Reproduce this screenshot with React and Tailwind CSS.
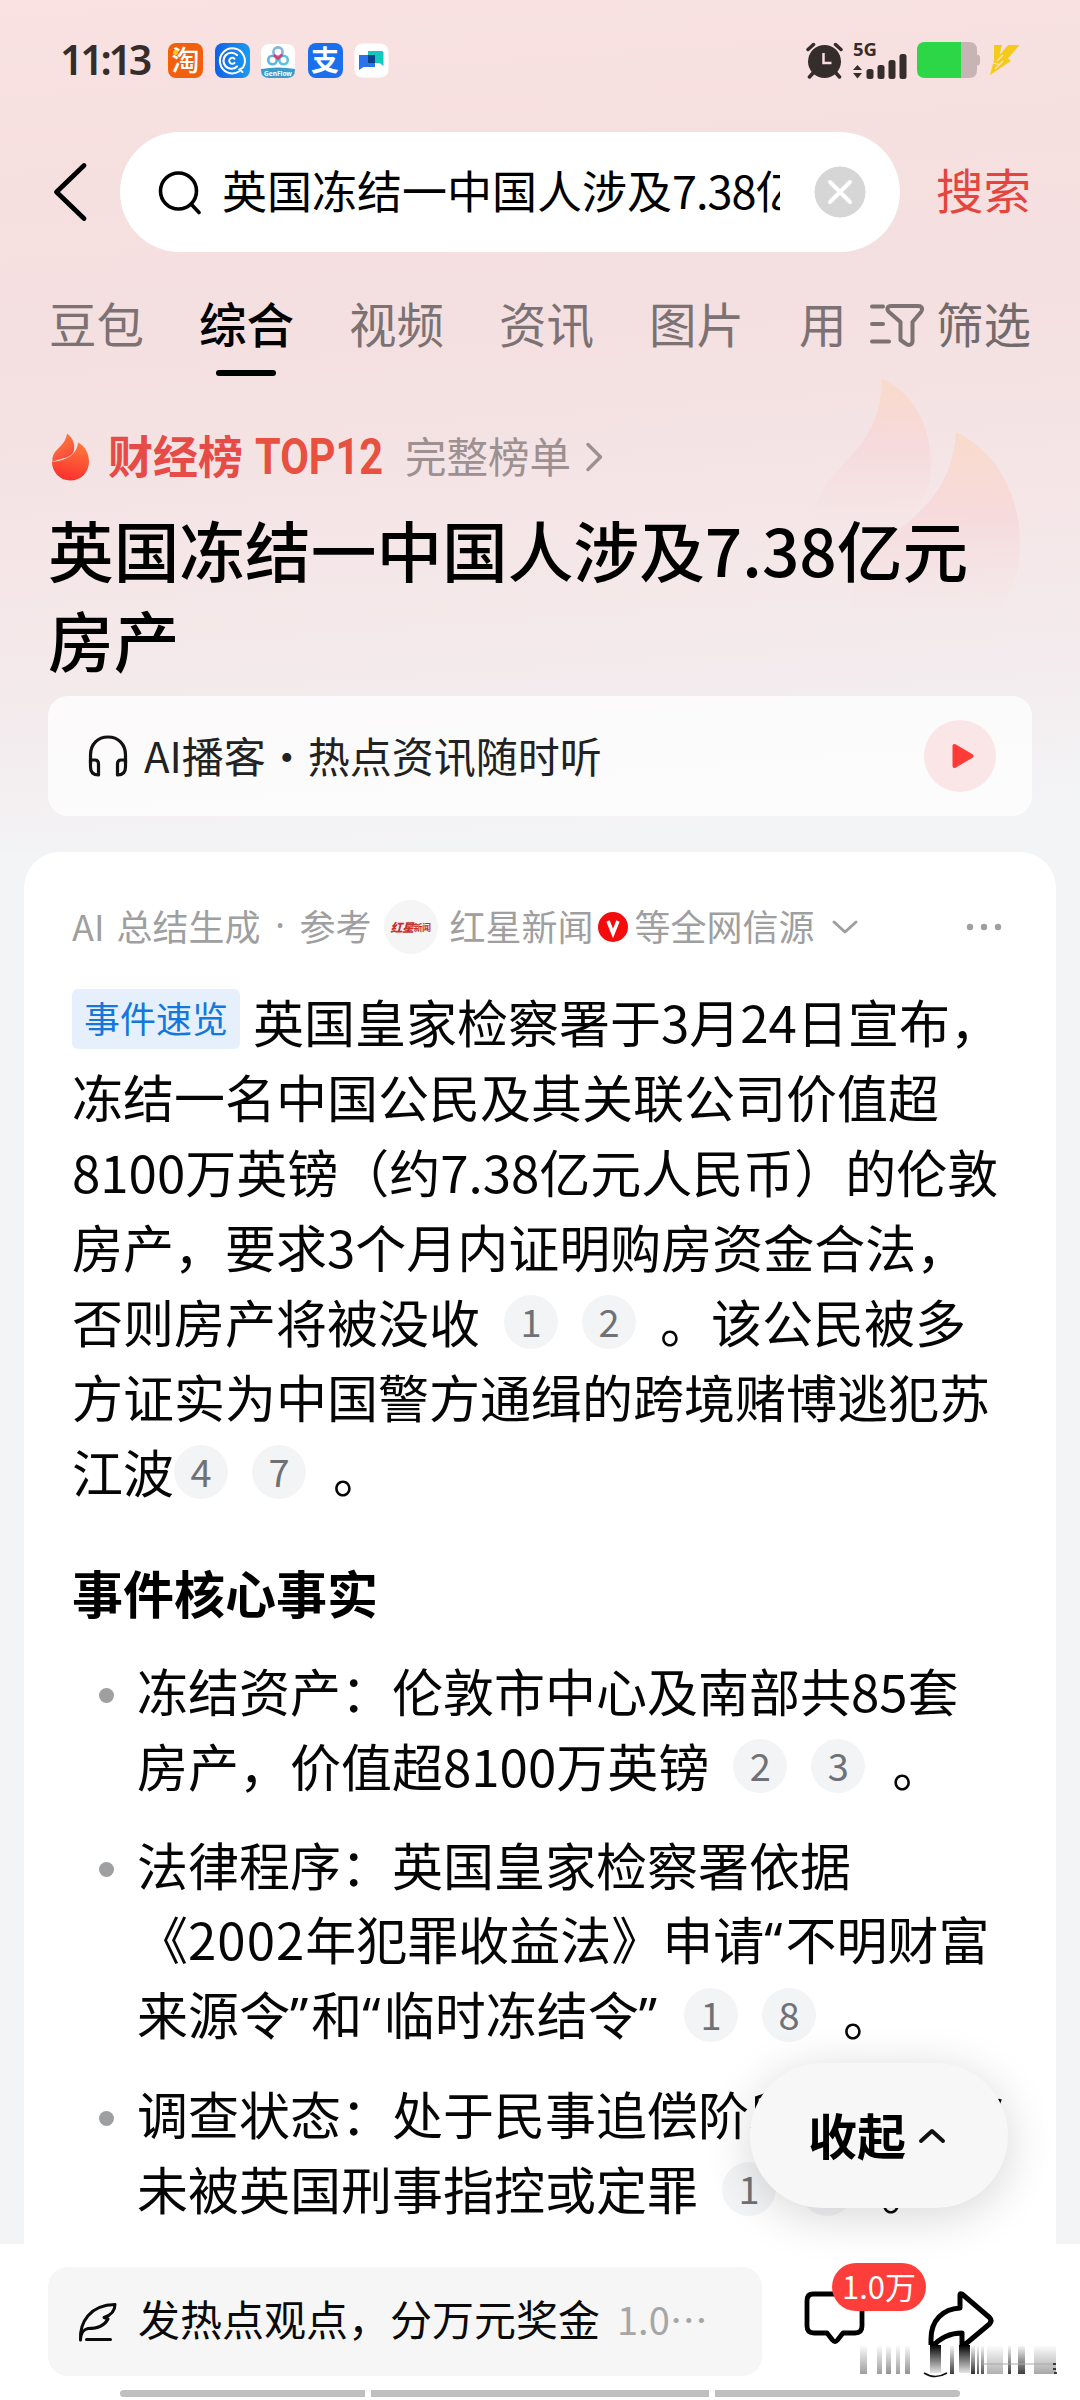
import React from 'react';

const tabs = ['豆包', '综合', '视频', '资讯', '图片', '用'];

// Citations are numbers, everything else is plain text
const summaryLines = [
  ['冻结一名中国公民及其关联公司价值超'],
  ['8100万英镑（约7.38亿元人民币）的伦敦'],
  ['房产，要求3个月内证明购房资金合法，'],
  ['否则房产将被没收', 1, 2, '。该公民被多'],
  ['方证实为中国警方通缉的跨境赌博逃犯苏'],
];

const facts = [
  [['冻结资产：伦敦市中心及南部共85套'], ['房产，价值超8100万英镑', 2, 3, '。']],
  [
    ['法律程序：英国皇家检察署依据'],
    ['《2002年犯罪收益法》申请“不明财富'],
    ['来源令”和“临时冻结令”', 1, 8, '。'],
  ],
  [['调查状态：处于民事追偿阶段，苏江波'], ['未被英国刑事指控或定罪', 1, 2, '。']],
];

// x, width, opacity
const smudgeBars = [
  [3, 7, 0.4], [20, 5, 0.4], [29, 5, 0.45], [39, 4, 0.4], [48, 5, 0.45],
  [93, 4, 0.8], [114, 4, 0.85], [120, 2, 0.7], [124, 3, 0.7],
  [130, 16, 0.32], [151, 3, 0.8], [161, 7, 0.8], [177, 22, 0.36],
];

const Cite = ({ n }) => (
  <span className="flex h-[54px] w-[54px] shrink-0 items-center justify-center rounded-full bg-[#f3f4f6] pb-0.5 text-[38px] leading-none text-[#6f7174]">
    {n}
  </span>
);

// Curly quotes are narrow, so they come from the Latin face
const RichText = ({ text }) => (
  <span className={text === '。' ? 'pl-[3px]' : ''}>
    {text.split(/([“”]|2002)/).map((part, i) => {
      if (part === '“' || part === '”') {
        return <span key={i} className="font-['Noto_Sans'] tracking-[3px]">{part}</span>;
      }
      if (part === '2002') {
        return <span key={i} className="tracking-[1px]">{part}</span>;
      }
      return part;
    })}
  </span>
);

const Line = ({ parts }) => (
  <div className="flex h-[75px] items-center gap-6 whitespace-nowrap">
    {parts.map((part, i) =>
      typeof part === 'number' ? <Cite key={i} n={part} /> : <RichText key={i} text={part} />
    )}
  </div>
);

const StatusBar = () => (
  <div className="flex h-[120px] items-center pl-[60px] pr-[60px]">
    <span className="w-[108px] pb-0.5 font-['Noto_Sans'] text-[41px] font-semibold leading-none tracking-[-3.2px] text-[#352c2c]">
      11:13
    </span>
    <div className="flex items-center gap-[11.5px]">
      <span className="relative flex h-[35px] w-[35px] items-center justify-center rounded-lg bg-[#f2600c] pb-0.5 text-[28px] font-medium leading-none text-white">
        淘
        <i className="absolute left-[5px] top-[7px] h-[5px] w-[5px] rounded-full bg-[#fdc81a]" />
      </span>
      <svg className="h-[35px] w-[35px]" viewBox="0 0 35 35" fill="none" stroke="#fff" strokeLinecap="round">
        <defs>
          <linearGradient id="qb" x1="0" x2="1">
            <stop offset="0" stopColor="#1260e6" />
            <stop offset="1" stopColor="#1a9bf0" />
          </linearGradient>
        </defs>
        <rect width="35" height="35" rx="8" fill="url(#qb)" stroke="none" />
        <path d="M24 28.5A12.500 12.500 0 1 1 28 24.500L24.500 26.500L27.500 29" strokeWidth="2" />
        <path d="M22 12a8 8 0 1 0 0 11.500" strokeWidth="2.200" />
        <path d="M19.500 15.800a3 3 0 1 0 0 4" strokeWidth="2" />
      </svg>
      <svg className="h-[35px] w-[35px]" viewBox="0 0 35 35">
        <rect y="1" width="34" height="34" rx="8" fill="#fff" />
        <path d="M0 26q17 -3 34 0v1q0 8-8 8H8q-8 0-8-8z" fill="#3d9bc9" />
        <g fill="none" strokeWidth="2.600">
          <circle cx="11.500" cy="17" r="4.300" stroke="#5cb5de" />
          <circle cx="22.500" cy="17" r="4.300" stroke="#58c3df" />
          <circle cx="17" cy="9" r="4.600" stroke="#7fb4dc" />
          <path d="M12.800 12l4.200 3.500 4.300-4" stroke="#d93a7c" />
        </g>
        <text x="17" y="32.500" textAnchor="middle" fontSize="6.500" fontWeight="700" fill="#fff" fontFamily="Noto Sans">
          GenFlow
        </text>
      </svg>
      <span className="flex h-[35px] w-[35px] items-center justify-center rounded-lg bg-[#1a6fee] pb-0.5 text-[28px] font-bold leading-none text-white">
        支
      </span>
      <svg className="h-[35px] w-[35px]" viewBox="0 0 35 35">
        <rect x="0.500" y="0.500" width="34" height="34" rx="8" fill="#fff" />
        <path d="M14 8h14q1.500 0 1.500 1.500V23l-4-3H14z" fill="#14c8c0" />
        <path d="M5 12h16v12H9.500L5 27z" fill="#2a73e8" />
        <path d="M14 12h7v8h-7z" fill="#0d3f8c" />
      </svg>
    </div>
    <div className="ml-auto flex items-center gap-2.5">
      <svg className="h-[37px] w-[37px]" viewBox="0 0 37 37" stroke="#352c2c" strokeWidth="3.500" strokeLinecap="round">
        <circle cx="18.500" cy="19.500" r="16.500" fill="#352c2c" stroke="none" />
        <path d="M2 7.500l5.500-5M35 7.500l-5.500-5M7 31l-3.500 4M30 31l3.500 4" />
        <path d="M17.500 11v10h8" stroke="#f8e0e0" strokeWidth="2.500" fill="none" strokeLinecap="butt" />
      </svg>
      <svg className="h-[37px] w-[54px] overflow-visible" viewBox="0 0 54 37" fill="#352c2c">
        <text x="0" y="14" fontSize="18.500" fontWeight="700" fontFamily="Noto Sans">5G</text>
        <path d="M0 28l4.500-5 4.500 5zM0 31l4.500 5.500 4.500-5.500z" />
        <rect x="13.500" y="27" width="7" height="10" rx="2.500" />
        <rect x="24.500" y="23" width="7" height="14" rx="2.500" />
        <rect x="35.500" y="18" width="7" height="19" rx="2.500" />
        <rect x="46.500" y="12" width="7" height="25" rx="2.500" />
      </svg>
      <svg className="h-9 w-[63px]" viewBox="0 0 63 36">
        <path d="M44 0h8q8 0 8 8v4.500q3 .5 3 3v5q0 2.500-3 3V28q0 8-8 8h-8z" fill="#c8b4b4" />
        <path d="M8 0h36v36H8q-8 0-8-8V8q0-8 8-8z" fill="#2bd747" />
      </svg>
      <svg className="h-[30px] w-[30px]" viewBox="0 0 30 30" fill="#f5cb1b">
        <path d="M4 0h8L9.500 10 18 0h11.500L18 13.500l3 2.500L0 30l4-15z" />
        <path d="M3 18l6 1.500M7 16l6-6M5 24l8-8" stroke="#f8e0e0" strokeWidth="1.200" />
      </svg>
    </div>
  </div>
);

const SearchBar = () => (
  <div className="flex h-[144px] items-center pl-[52px] pr-[49px]">
    <svg className="h-[64px] w-[38px]" viewBox="0 0 38 64" fill="none" stroke="#000" strokeWidth="4.800" strokeLinecap="round" strokeLinejoin="round">
      <path d="M32 5.500L4.500 32 32 58.500" />
    </svg>
    <div className="ml-[30px] flex h-[120px] w-[780px] items-center rounded-full bg-white pl-[38px] pr-[34px]">
      <svg className="h-[46px] w-[46px]" viewBox="0 0 46 46" fill="none" stroke="#000" strokeWidth="3.600" strokeLinecap="round">
        <circle cx="20.500" cy="22" r="18" />
        <path d="M33.500 35.500l7.500 8" />
      </svg>
      <span className="mb-[5px] ml-[18px] w-[558px] overflow-hidden whitespace-nowrap text-[45px] leading-[68px] text-black">
        英国冻结一中国人涉及<span className="tracking-[-1px]">7.38</span>亿元房产
      </span>
      <svg className="ml-auto h-[52px] w-[52px]" viewBox="0 0 52 52" fill="none" stroke="#fff" strokeWidth="4" strokeLinecap="round">
        <circle cx="26" cy="26" r="25.500" fill="#d6d6d6" stroke="none" />
        <path d="M16 16l20 20M36 16L16 36" />
      </svg>
    </div>
    <span className="mb-[7px] ml-auto text-[47.5px] leading-none text-[#e5453f]">搜索</span>
  </div>
);

const TabBar = () => (
  <div className="flex h-[116px] items-center pl-[49px] pr-[49px] pt-0.5 text-[47.5px] leading-[60px] text-[#7c7273]">
    <div className="flex gap-[55px]">
      {tabs.map((tab) =>
        tab === '综合' ? (
          <span key={tab} className="relative font-medium text-black">
            {tab}
            <i className="absolute -bottom-[23px] left-[17px] h-1.5 w-[60px] rounded-full bg-black" />
          </span>
        ) : (
          <span key={tab}>{tab}</span>
        )
      )}
    </div>
    <svg className="ml-auto mt-1 h-[48px] w-[56px]" viewBox="0 0 56 48" fill="none" stroke="#7c7273" strokeWidth="4" strokeLinecap="round" strokeLinejoin="round">
      <path d="M3 5.500h11M3 23h11M3 40.500h17" />
      <path d="M22 5h27c4.500 0 5 3.500 3 6L43.500 21v19c0 4-4 5-7 2.500l-5-3.500V21L20 11c-2.500-2.500-2-6 2-6z" />
    </svg>
    <span className="ml-[11px] text-[#736a6b]">筛选</span>
  </div>
);

const Flames = () => (
  <svg className="absolute left-[812px] top-[376px] h-[260px] w-[210px]" viewBox="0 0 210 260">
    <defs>
      <linearGradient id="fl" x1="0" y1="0" x2="0" y2="1">
        <stop offset="0" stopColor="#fcd5b8" stopOpacity=".6" />
        <stop offset=".45" stopColor="#f9cfd2" stopOpacity=".5" />
        <stop offset="1" stopColor="#f6dede" stopOpacity="0" />
      </linearGradient>
    </defs>
    <path d="M70 3C104 18 119 52 119 90C119 118 106 132 90 146L0 150C4 86 68 86 70 3Z" fill="url(#fl)" />
    <path d="M144 56C182 74 208 115 208 168C208 204 195 228 176 244L40 244C34 150 138 160 144 56Z" fill="url(#fl)" />
  </svg>
);

const TopicHeader = () => (
  <div className="px-[48px]">
    <div className="flex h-[72px] items-center">
      <svg className="h-[48px] w-[42px]" viewBox="0 0 42 48">
        <defs>
          <linearGradient id="fa" x1="0" y1="0" x2=".5" y2="1">
            <stop offset="0" stopColor="#ff8a3c" />
            <stop offset="1" stopColor="#f9493c" />
          </linearGradient>
          <linearGradient id="fb" x1=".7" y1="0" x2=".5" y2="1">
            <stop offset="0" stopColor="#ff7a3a" />
            <stop offset="1" stopColor="#fb3030" />
          </linearGradient>
        </defs>
        <path d="M30 9.500C37 13 41 20 41 28.500C41 39.500 33 47.500 22.500 47.500C11 47.500 4 38 4 29C14 28 29 24 30 9.500Z" fill="url(#fb)" />
        <path d="M19 0.500C25 5 27 11 26 17C24 26 12 25 4.500 29C3 16 17 15 19 0.500Z" fill="url(#fa)" />
      </svg>
      <span className="mb-[5px] ml-[18px] text-[45px] font-bold leading-none text-[#e64b48]">财经榜</span>
      <span className="ml-[12px] w-[126px] origin-left scale-x-[0.83] whitespace-nowrap font-['Roboto'] text-[50px] font-bold leading-none text-[#e8503f]">
        TOP12
      </span>
      <span className="mb-[3px] ml-[24px] text-[41.5px] leading-none text-[#9c9091]">完整榜单</span>
      <svg className="ml-[14px] h-[32px] w-[20px]" viewBox="0 0 20 32" fill="none" stroke="#9c9091" strokeWidth="3.500" strokeLinecap="round" strokeLinejoin="round">
        <path d="M3 3.500L15.500 16 3 28.500" />
      </svg>
    </div>
    <h1 className="mt-[11px] text-[65.7px] font-medium leading-[90px] text-black">
      英国冻结一中国人涉及7.38亿元
      <br />
      房产
    </h1>
    <div className="mt-[12px] flex h-[120px] items-center rounded-[20px] bg-white/75 pl-[40px] pr-[36px]">
      <svg className="h-[42px] w-[40px]" viewBox="0 0 40 42" fill="none" stroke="#111" strokeWidth="3.200" strokeLinecap="round" strokeLinejoin="round">
        <path d="M2.500 28V20C2.500 9 10 2 20 2S37.500 9 37.500 20V28" />
        <path d="M2.500 25h4.500q3.500 0 3.500 4v11q-8 0-8-8zM37.500 25H33q-3.500 0-3.500 4v11q8 0 8-8z" />
      </svg>
      <span className="mb-[3px] ml-[16px] text-[42px] leading-none text-[#222]">AI播客・热点资讯随时听</span>
      <svg className="ml-auto h-[72px] w-[72px]" viewBox="0 0 72 72">
        <circle cx="36" cy="36" r="36" fill="#fbe6e7" />
        <path d="M30.500 26v20l17-10z" fill="#ff3b38" stroke="#ff3b38" strokeWidth="4" strokeLinejoin="round" />
      </svg>
    </div>
  </div>
);

const SourceRow = () => (
  <div className="flex h-[54px] items-center whitespace-nowrap text-[36px] leading-none text-[#9f9fa1]">
    <span className="mb-[5px] [word-spacing:4px]">AI 总结生成</span>
    <span className="mb-[5px] w-[39px] text-center font-['Noto_Sans']">·</span>
    <span className="mb-[5px]">参考</span>
    <span className="ml-[12px] flex h-[54px] w-[54px] items-center justify-center rounded-full bg-[#f5f5f5] text-[9px] font-bold tracking-[-0.5px] text-[#c5322f]">
      <b className="text-[12px] italic">红星</b>新闻
    </span>
    <span className="mb-[5px] ml-[12px]">红星新闻</span>
    <svg className="ml-[4px] h-[30px] w-[30px]" viewBox="0 0 30 30">
      <circle cx="15" cy="15" r="15" fill="#f40b0b" />
      <path d="M10 9l5 12.500L20 9" fill="none" stroke="#fff" strokeWidth="3.500" />
    </svg>
    <span className="mb-[5px] ml-[7px]">等全网信源</span>
    <svg className="ml-[16px] h-[16px] w-[28px]" viewBox="0 0 28 16" fill="none" stroke="#9f9fa1" strokeWidth="3" strokeLinecap="round" strokeLinejoin="round">
      <path d="M3 3l11 10L25 3" />
    </svg>
    <svg className="ml-auto mr-[6px] h-[8px] w-[36px]" viewBox="0 0 36 8" fill="#9f9fa1">
      <circle cx="4" cy="4" r="3.200" />
      <circle cx="18" cy="4" r="3.200" />
      <circle cx="32" cy="4" r="3.200" />
    </svg>
  </div>
);

const SummaryCard = () => (
  <div className="mx-[24px] h-[1392px] overflow-hidden rounded-t-[36px] bg-white px-[48px] pt-[48px]">
    <SourceRow />
    <div className="mt-[30px] text-[51px] leading-[75px] text-[#060606]">
      <div className="flex h-[75px] items-center whitespace-nowrap">
        <span className="mb-[6px] mr-[13px] flex h-[60px] w-[168px] items-center justify-center rounded-md bg-[#e5f0fc] pb-1 text-[36px] leading-none text-[#1377dc]">
          事件速览
        </span>
        英国皇家检察署于3月24日宣布，
      </div>
      {summaryLines.map((parts, i) => (
        <Line key={i} parts={parts} />
      ))}
      <div className="flex h-[75px] items-center">
        江波
        <div className="flex items-center gap-6">
          <Cite n={4} />
          <Cite n={7} />
          <span className="pl-[3px]">。</span>
        </div>
      </div>
      <h2 className="mt-[46px] font-bold leading-[75px] text-black">事件核心事实</h2>
      <ul className="mt-[23px] space-y-6">
        {facts.map((lines, i) => (
          <li key={i} className="flex pl-[27px]">
            <i className="mr-[23px] mt-[35px] h-[15px] w-[15px] shrink-0 rounded-full bg-[#9e9fa1]" />
            <div>
              {lines.map((parts, j) => (
                <Line key={j} parts={parts} />
              ))}
            </div>
          </li>
        ))}
      </ul>
    </div>
  </div>
);

const CollapseButton = () => (
  <button className="absolute left-[750px] top-[2063px] flex h-[145px] w-[258px] items-center rounded-full bg-[#f7f7f7] pl-[58px] shadow-[0_8px_48px_rgba(0,0,0,0.16)]">
    <span className="mb-1 text-[49px] font-bold leading-none text-black">收起</span>
    <svg className="ml-[11px] h-[18px] w-[30px]" viewBox="0 0 30 18" fill="none" stroke="#111" strokeWidth="4" strokeLinecap="round" strokeLinejoin="round">
      <path d="M4 14L15 4l11 10" />
    </svg>
  </button>
);

const BottomBar = () => (
  <div className="relative h-[156px] bg-white px-[48px] pt-[23px]">
    <div className="flex items-start">
      <div className="flex h-[109px] w-[714px] items-center rounded-[20px] bg-[#f6f6f6] pl-[29px] text-[42px] leading-none">
        <svg className="h-[42px] w-[42px]" viewBox="0 0 42 42" fill="none" stroke="#0a0a0a" strokeWidth="3" strokeLinecap="round" strokeLinejoin="round">
          <path d="M3.500 39C2.500 21 13 4 38 3.500C38 10 34.500 14 27 16.500l4 1.500c-4 8-14 9.500-20 9.500c-5 1-7 4-7.500 11.500M9.500 38.500h24" />
        </svg>
        <span className="mb-[8px] ml-[19px] text-[#0a0a0a]">发热点观点，分万元奖金</span>
        <span className="mb-[6px] ml-[17px] text-[38px] text-[#a6a6a6]">
          1.0<span>⋯</span>
        </span>
      </div>
      <svg className="ml-[40px] mt-[22px] h-[60px] w-[64px]" viewBox="0 0 64 60" fill="none" stroke="#000" strokeWidth="4.800" strokeLinejoin="round">
        <path d="M11 5h42q7 0 7 7v25q0 7-7 7H41l-5.500 7q-2.500 3-5 0L25 44H12q-7 0-7-7V12q0-7 6-7z" />
      </svg>
      <svg className="ml-[58px] mt-[20px] h-[90px] w-[72px]" viewBox="0 0 72 90" fill="none" stroke="#000" strokeWidth="5" strokeLinejoin="round" strokeLinecap="round">
        <path d="M7 62V52C7 33 19 22 36 21V8q0-2 2-1L65.500 30.500q3 3 0 6.500L38 60V46C24 46 15 52 8 60" />
      </svg>
    </div>
    <span className="absolute left-[832px] top-[19px] flex h-[48px] w-[94px] items-center justify-center rounded-full bg-[#fe3e3a] pb-[3px] text-[31px] leading-none text-white">
      1.0万
    </span>
    <svg className="absolute left-[857px] top-[101px] h-[34px] w-[200px]" viewBox="0 0 200 34">
      <defs>
        <linearGradient id="sm" x1="0" y1="0" x2="0" y2="1">
          <stop offset="0" stopColor="#000" stopOpacity=".05" />
          <stop offset="1" stopColor="#000" stopOpacity=".95" />
        </linearGradient>
        <linearGradient id="stem" x1="0" y1="0" x2="0" y2="1">
          <stop offset="0" stopColor="#000" />
          <stop offset="1" stopColor="#000" stopOpacity=".1" />
        </linearGradient>
      </defs>
      <rect width="200" height="34" fill="#fff" />
      {smudgeBars.map(([x, w, o]) => (
        <rect key={x} x={x} y="1" width={w} height="28" fill="url(#sm)" opacity={o} />
      ))}
      <rect x="73" width="11" height="28" fill="url(#stem)" />
      <rect x="102" width="11" height="28" fill="url(#stem)" />
      <path d="M125 19h73" stroke="#aaa" strokeWidth="1" />
      <path d="M67 28q11 7 23 0M196 19h3M196 24h3M197 28h3" fill="none" stroke="#111" strokeWidth="1.500" />
    </svg>
    <div className="absolute left-[120px] top-[146px] flex h-[7px] w-[840px] gap-1.5 overflow-hidden rounded-full">
      <i className="flex-1 bg-[#bfbfbf]" />
      <i className="w-[338px] bg-[#bfbfbf]" />
      <i className="flex-1 bg-[#bfbfbf]" />
    </div>
  </div>
);

const App = () => (
  <div className="relative h-[2400px] w-[1080px] overflow-hidden bg-[#f3f4f6] font-['Noto_Sans_CJK_SC',sans-serif]">
    <div className="bg-[linear-gradient(176deg,#fae2e2_0%,#f6dfdf_20%,#f4e0e1_40%,#f5e6e7_62%,#f3ecee_80%,#f3f4f6_94%)] pb-[36px]">
      <StatusBar />
      <SearchBar />
      <TabBar />
      <Flames />
      <div className="relative pt-[41px]">
        <TopicHeader />
      </div>
    </div>
    <SummaryCard />
    <BottomBar />
    <CollapseButton />
  </div>
);

export default App;
